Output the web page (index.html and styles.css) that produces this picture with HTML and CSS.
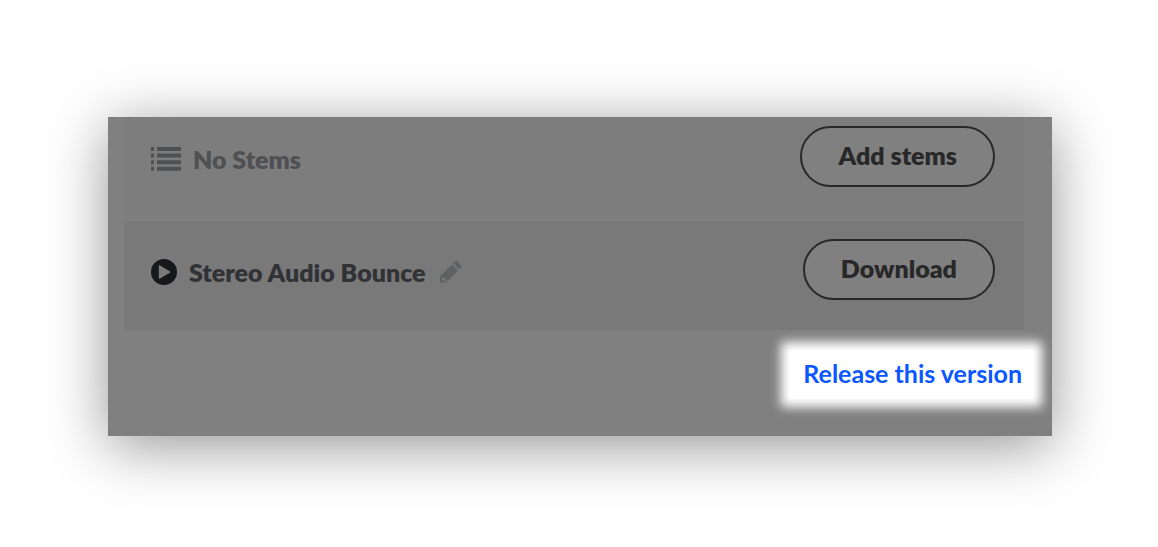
FILE: index.html
```html
<!DOCTYPE html>
<html lang="en">
<head>
<meta charset="utf-8">
<meta name="viewport" content="width=device-width, initial-scale=1">
<title>Release this version</title>
<link rel="stylesheet" href="styles.css">
</head>
<body>
<main class="panel">
  <section class="row row-stems">
    <div class="label label-muted">
      <svg class="icon-list" viewBox="0 0 30 24" aria-hidden="true">
        <path d="M0 0h3v4H0zM6 0h24v4H6zM0 6.600h3v4H0zM6 6.600h24v4H6zM0 13.200h3v4H0zM6 13.200h24v4H6zM0 19.800h3v4H0zM6 19.800h24v4H6z"/>
      </svg>
      <span>No Stems</span>
    </div>
    <button class="button" type="button">Add stems</button>
  </section>
  <section class="row row-bounce">
    <div class="label">
      <button class="icon-button" type="button" aria-label="Play">
        <svg class="icon-play" viewBox="0 0 26 26" aria-hidden="true">
          <path fill-rule="evenodd" d="M13 0a13 13 0 1 1 0 26a13 13 0 0 1 0-26zM8.6 6.3q-.8-.4-.8.6v12.300q0 1 .8.5l10.600-6.100q.8-.6 0-1.100z"/>
        </svg>
      </button>
      <span class="title">Stereo Audio Bounce</span>
      <button class="icon-button" type="button" aria-label="Rename">
        <svg class="icon-pencil" viewBox="0 0 22 22" aria-hidden="true">
          <path fill-rule="evenodd" d="M0 21.5V15.5L12 3.5L18 9.5L6 21.5zM2 17.2v1.8h1.8v1.7h1.7l1.2-1.2l-3.5-3.5zM13.2 2.3L14.8.7q1.3-1.3 2.6 0L20.800 4.100q1.300 1.300 0 2.600L19.200 8.300z"/>
        </svg>
      </button>
    </div>
    <button class="button" type="button">Download</button>
  </section>
  <footer class="footer">
    <a class="release" href="#release">Release this version</a>
  </footer>
</main>
</body>
</html>
```
FILE: styles.css
```css
* {
  box-sizing: border-box;
}

body {
  margin: 0;
  padding: 117px 106px 111px 108px;
  background: #fff;
  font-family: Lato, "Liberation Sans", sans-serif;
  font-size: 25px;
  line-height: 30px;
}

.panel {
  background: #808080;
  box-shadow: 0 10px 56px rgba(0, 0, 0, 0.42);
}

.row {
  display: flex;
  align-items: flex-start;
  justify-content: space-between;
  margin: 0 28px 0 16px;
  padding-right: 29px;
  padding-left: 27px;
}

.row-stems {
  padding-top: 9px;
  padding-bottom: 31px;
  border-bottom: 3px solid #808080;
  background: #7d7d7d;
}

.row-bounce {
  padding-top: 18px;
  padding-bottom: 30px;
  background: #797979;
}

.label {
  display: flex;
  align-items: center;
  padding-top: 18px;
  color: #313236;
  font-weight: 800;
}

.label-muted {
  gap: 12px;
  color: #4e5052;
}

.title {
  margin: 0 14px 0 12px;
}

.icon-button {
  display: flex;
  padding: 0;
  border: 0;
  background: none;
}

.icon-list {
  width: 30px;
  height: 24px;
  fill: #4e5052;
}

.icon-play {
  width: 26px;
  height: 26px;
  fill: #15191c;
}

.icon-pencil {
  width: 22px;
  height: 22px;
  fill: #5e6062;
}

.button {
  height: 61px;
  padding: 0 36px 3px;
  border: 2px solid #282828;
  border-radius: 31px;
  background: #808080;
  color: #282828;
  font: inherit;
  font-weight: 800;
}

.footer {
  display: flex;
  justify-content: flex-end;
  padding: 20px 18px 37px;
}

.release {
  padding: 8px 12px 11px 14px;
  background: #fff;
  box-shadow: 0 0 10px 8px #fff;
  color: #0a57ff;
  font-weight: 700;
  text-decoration: none;
}
```
